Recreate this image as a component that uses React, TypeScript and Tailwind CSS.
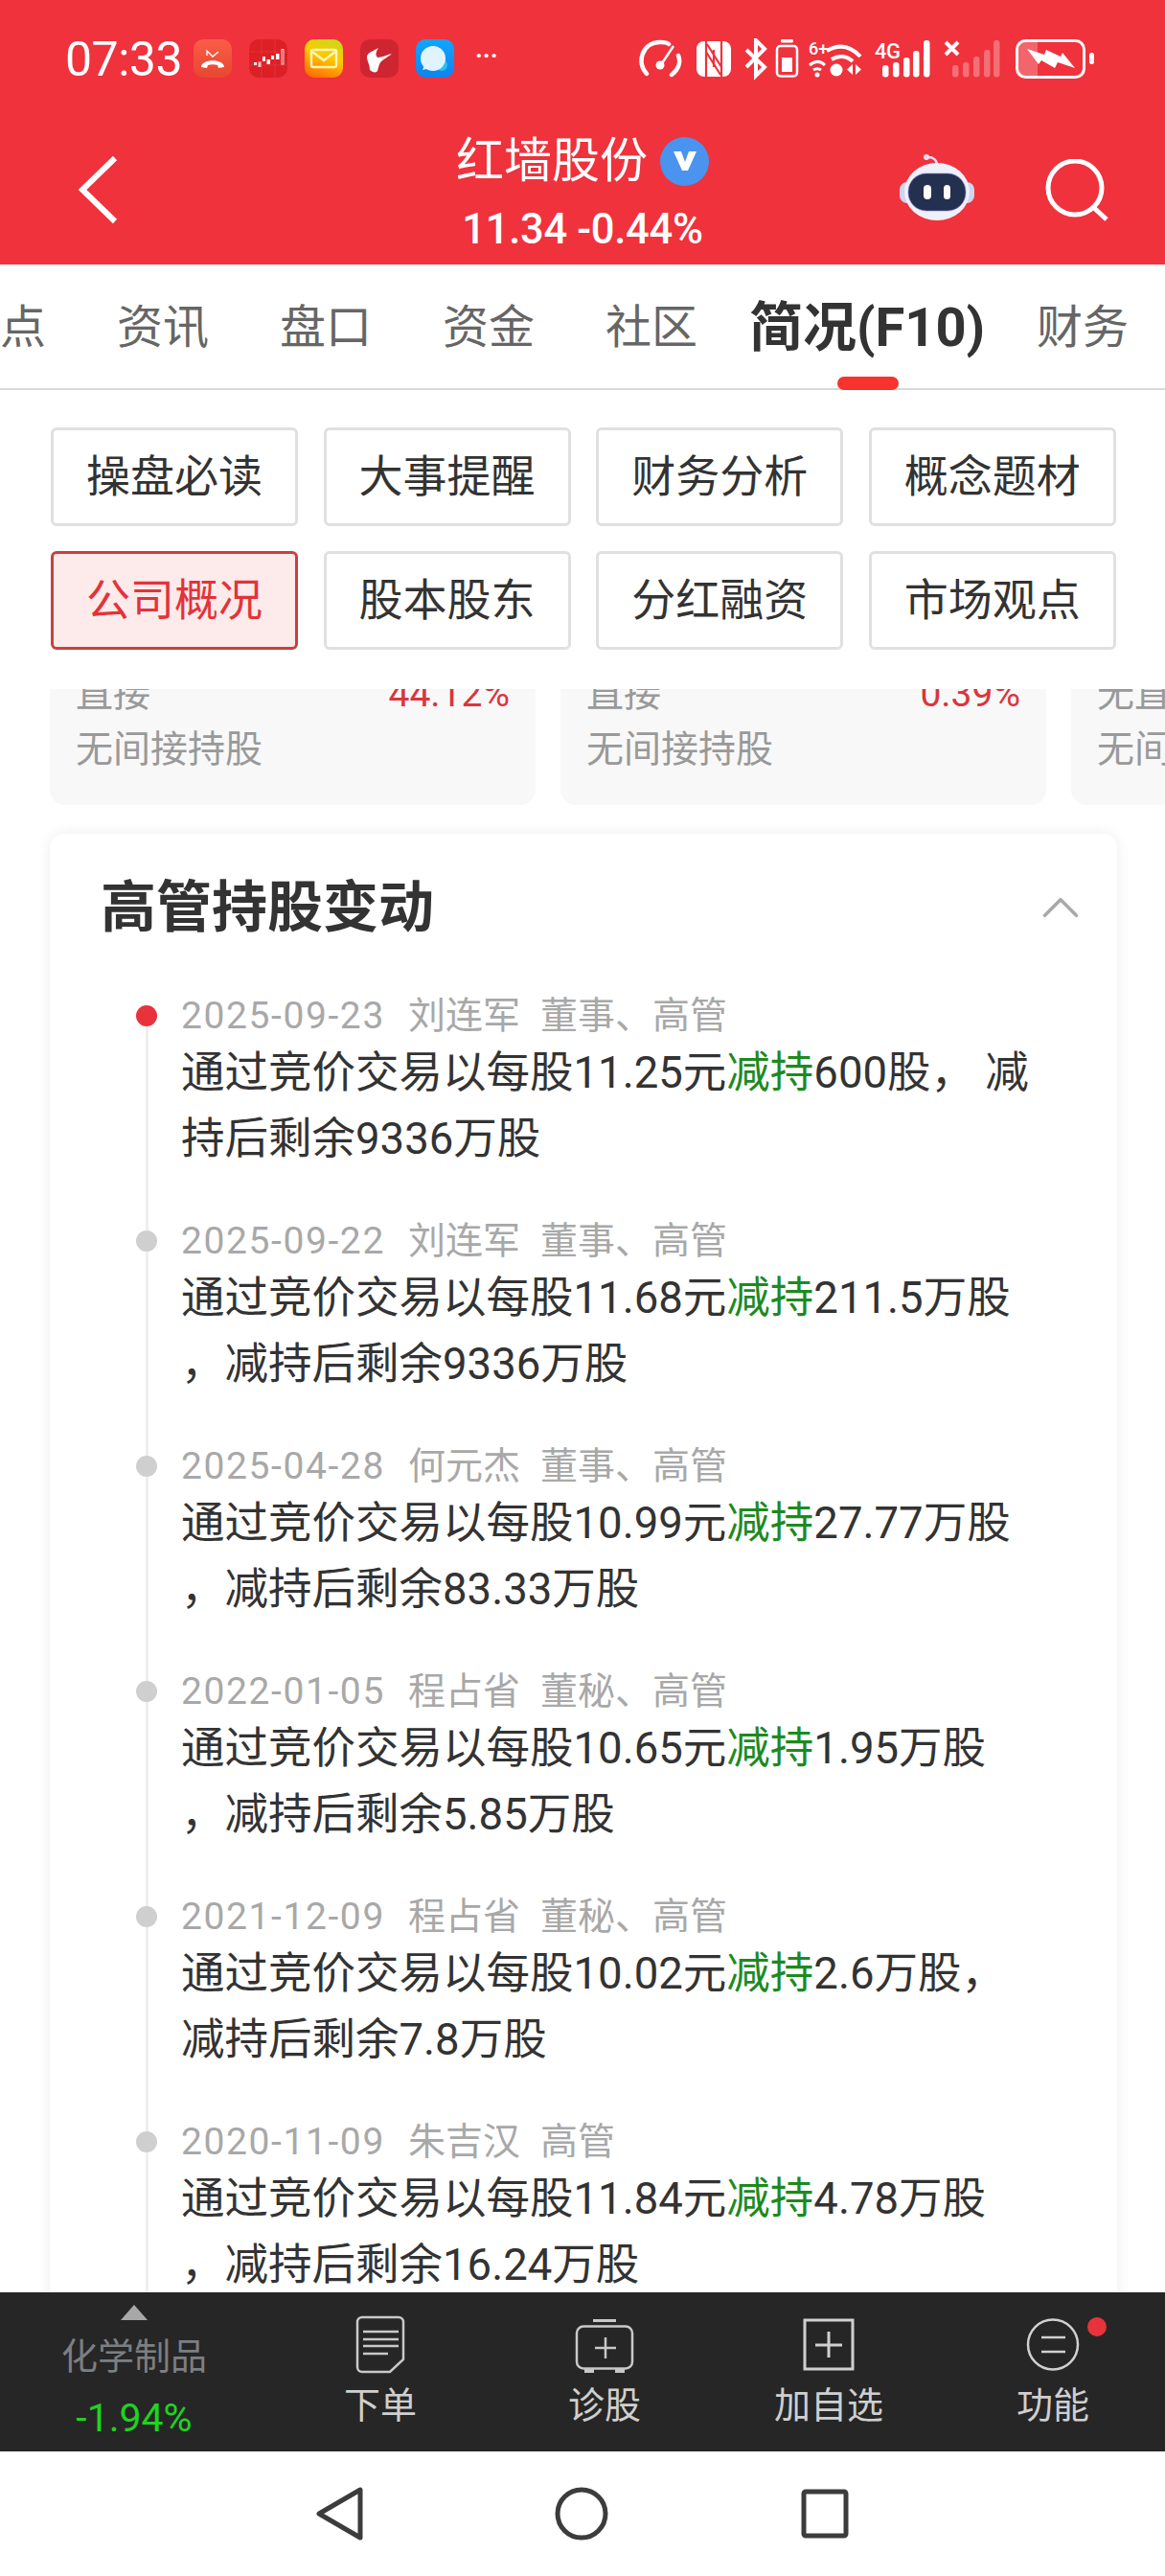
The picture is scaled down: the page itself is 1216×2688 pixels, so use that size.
import { ChevronUp } from "lucide-react";

const TABS = [
  { label: "点", className: "w-[85px]" },
  { label: "资讯", className: "w-[170px]" },
  { label: "盘口", className: "w-[170px]" },
  { label: "资金", className: "w-[170px]" },
  { label: "社区", className: "w-[170px]" },
];

const CHIPS = ["操盘必读", "大事提醒", "财务分析", "概念题材", "公司概况", "股本股东", "分红融资", "市场观点"];

const HOLDINGS = [
  { date: "2025-09-23", name: "刘连军", role: "董事、高管", price: "11.25", line1: "600股， 减", line2: "持后剩余9336万股" },
  { date: "2025-09-22", name: "刘连军", role: "董事、高管", price: "11.68", line1: "211.5万股", line2: "，减持后剩余9336万股" },
  { date: "2025-04-28", name: "何元杰", role: "董事、高管", price: "10.99", line1: "27.77万股", line2: "，减持后剩余83.33万股" },
  { date: "2022-01-05", name: "程占省", role: "董秘、高管", price: "10.65", line1: "1.95万股", line2: "，减持后剩余5.85万股" },
  { date: "2021-12-09", name: "程占省", role: "董秘、高管", price: "10.02", line1: "2.6万股，", line2: "减持后剩余7.8万股" },
  { date: "2020-11-09", name: "朱吉汉", role: "高管", price: "11.84", line1: "4.78万股", line2: "，减持后剩余16.24万股" },
];

const FONT = "font-['Roboto','Noto_Sans_CJK_SC',sans-serif]";

function AppIcon({ className, children }: { className: string; children: React.ReactNode }) {
  return (
    <div className={`h-[40px] w-[40px] overflow-hidden rounded-[10px] ${className}`}>
      <svg width="40" height="40" viewBox="0 0 40 40" fill="none">
        {children}
      </svg>
    </div>
  );
}

function NotificationIcons() {
  return (
    <div className="ml-[14px] flex gap-[18px] pt-[1px]">
      <AppIcon className="bg-linear-to-b from-[#fb5c47] to-[#e8472f]">
        <path d="M14 17v-5l6 6 6-5" stroke="#fff" strokeWidth="1.3" />
        <path d="M8 29c0-9 24-9 24 0l-6 1-1-3c-3-1-7-1-10 0l-1 3z" fill="#fff" />
      </AppIcon>
      <AppIcon className="bg-[#dd2025]">
        <path d="M0 13h40M0 27h40M13 0v40M27 0v40" stroke="#fff" strokeOpacity=".08" />
        <g fill="#fff">
          <rect x="5" y="24" width="3" height="3" />
          <rect x="9.5" y="23.5" width="3" height="5.5" fillOpacity=".7" />
          <rect x="14" y="18" width="3" height="5" />
          <rect x="18.5" y="21" width="3.5" height="5" />
          <rect x="23" y="17" width="3" height="4" />
          <rect x="28" y="15" width="3.5" height="6" />
        </g>
        <rect x="34" y="10.5" width="2" height="15.5" stroke="#fff" strokeOpacity=".8" />
      </AppIcon>
      <AppIcon className="bg-[linear-gradient(200deg,#bfdc1e,#ffc800_45%,#ff5e00)]">
        <rect x="7" y="11" width="26" height="18" rx="2" stroke="#fff6b0" strokeWidth="2.5" />
        <path d="M8 13l12 9 12-9" stroke="#fff6b0" strokeWidth="2.5" />
      </AppIcon>
      <AppIcon className="bg-[#cf2530]">
        <path d="M20 7C18 12 8 12 7 18c0 5 3 8 3 14 3 3 7 3 8 1 1-4 2-8 4-10 3-3 8-5 11-8-5 1-10 4-15 4-3-3-1-7 2-12z" fill="#fff" />
      </AppIcon>
      <AppIcon className="bg-linear-to-b from-[#12a5ff] to-[#0f83ee]">
        <circle cx="27" cy="27" r="6" fill="#25c0f2" />
        <circle cx="18" cy="20" r="13" fill="#dff4ff" />
        <path d="M9 27l-2 5 8-2z" fill="#dff4ff" />
      </AppIcon>
    </div>
  );
}

function SystemIcons() {
  return (
    <svg width="484" height="44" viewBox="0 0 484 44" fill="none" className="shrink-0">
      {/* speed */}
      <path d="M8 37C-3 26 3 4 22 4c4 0 7 0 9 2M41 18c3 7 0 15-7 20" stroke="#fff" strokeWidth="4.5" strokeLinecap="round" />
      <path d="M36 8L24 26" stroke="#fff" strokeWidth="2.5" />
      <circle cx="22" cy="28" r="4.5" fill="#fff" />
      {/* nfc */}
      <rect x="60" y="3" width="36" height="37" rx="8" fill="#fff" />
      <path d="M70 3v37M86 3v37M71 6l15 24M70 14l15 24M78 12v18" stroke="#ef323c" strokeWidth="2.2" />
      {/* bluetooth */}
      <path d="M112 12l19 18-9 9V2l9 9-19 19" stroke="#fff" strokeWidth="4" />
      {/* small battery */}
      <rect x="148" y="1" width="13" height="3.5" rx="1.5" fill="#fff" />
      <rect x="144" y="8" width="21" height="31.5" rx="3.5" stroke="#fff" strokeWidth="2.5" />
      <rect x="149" y="20" width="11" height="15" fill="#fff" />
      {/* wifi */}
      <text x="177" y="17" fill="#fff" fontSize="18" fontFamily="Roboto" fontWeight="500">6+</text>
      <path d="M196 13c12-7 24-6 35 6M201 22c7-4 15-4 22 2" stroke="#fff" strokeWidth="4" />
      <path d="M178 28c6-5 11-5 16 0M182 33c3-2 5-2 8 0" stroke="#fff" strokeWidth="3" />
      <circle cx="186" cy="38" r="2.5" fill="#fff" />
      <circle cx="206" cy="33" r="6.5" fill="#fff" />
      <path d="M223 27v11l-6-5.5zM226 27v11l6-5.5z" fill="#fff" />
      {/* 4G */}
      <text x="246" y="21" fill="#fff" fontSize="22" fontFamily="Roboto" fontWeight="500" textLength="27">4G</text>
      <g fill="#fff">
        <rect x="254" y="28" width="6.5" height="12.5" rx="3" />
        <rect x="265" y="25" width="6.5" height="15.5" rx="3" />
        <rect x="276" y="20" width="6.5" height="20.5" rx="3" />
        <rect x="286" y="13" width="6.5" height="27.5" rx="3" />
        <rect x="297" y="2" width="6.5" height="38.5" rx="3" />
      </g>
      {/* empty sim */}
      <path d="M320 4l13 13M333 4l-13 13" stroke="#fff" strokeWidth="4" />
      <g fill="#fff" fillOpacity=".3">
        <rect x="327" y="28" width="6.5" height="12.5" rx="3" />
        <rect x="338" y="25" width="6.5" height="15.5" rx="3" />
        <rect x="349" y="19" width="6.5" height="21.5" rx="3" />
        <rect x="360" y="12" width="6.5" height="28.5" rx="3" />
        <rect x="370" y="2" width="6.5" height="38.5" rx="3" />
      </g>
      {/* battery */}
      <rect x="394.5" y="2.5" width="70" height="38" rx="9" stroke="#fff" strokeWidth="3" />
      <path d="M396 11a7 7 0 0 1 7-7h13v35h-13a7 7 0 0 1-7-7z" fill="#fff" fillOpacity=".25" />
      <path d="M405 11l18 6 2-5 15 7 2-4 13 16-18-6-3 6-14-8-3 4z" fill="#fff" />
      <rect x="470" y="15" width="5" height="12" rx="2.5" fill="#fff" />
    </svg>
  );
}

function Robot() {
  return (
    <svg width="80" height="74" viewBox="0 0 80 74" fill="none">
      <path d="M31 3c5 0 9 3 9 8" stroke="#e4d8f4" strokeWidth="2.5" />
      <circle cx="29" cy="3" r="3" fill="#e8dcf4" />
      <rect x="1" y="29" width="78" height="22" rx="8" fill="#cfd4ef" />
      <ellipse cx="40" cy="39" rx="34" ry="30" fill="#eef0fa" />
      <rect x="10" y="20" width="60" height="39" rx="19" fill="#24304f" stroke="#8a74d8" strokeOpacity=".6" />
      <rect x="26" y="32" width="8" height="15" rx="4" fill="#fff" />
      <rect x="47" y="32" width="7" height="15" rx="3.5" fill="#fff" />
    </svg>
  );
}

function Header() {
  return (
    <header className="flex h-[276px] shrink-0 flex-col bg-[#ef323c] text-white">
      <div className="flex h-[124px] items-start pl-[68px] pt-[40px] pr-[65px]">
        <span className="w-[120px] text-[50px] leading-[44px] tracking-[-0.5px]">07:33</span>
        <NotificationIcons />
        <span className="ml-[22px] text-[26px] font-bold leading-[36px]">···</span>
        <div className="ml-auto">
          <SystemIcons />
        </div>
      </div>
      <div className="relative flex flex-1 flex-col items-center">
        <div className="mt-[14px] flex items-center">
          <span className="text-[50px] leading-[60px]">红墙股份</span>
          <span className="ml-[13px] flex h-[51px] w-[51px] items-center justify-center rounded-full bg-[#4a93ee]">
            <svg width="26" height="22" viewBox="0 0 26 22"><path d="M1 1h8l4 11 4-11h8l-9 20h-6z" fill="#fff" /></svg>
          </span>
        </div>
        <div className="mt-[19px] text-[43.5px] font-medium leading-[46px] tracking-[-0.3px]">11.34 -0.44%</div>
        <svg width="42" height="72" viewBox="0 0 42 72" fill="none" className="absolute left-[82px] top-[38px]">
          <path d="M38 3L4 36l34 33" stroke="#fff" strokeWidth="6" />
        </svg>
        <div className="absolute left-[938px] top-[37px]">
          <Robot />
        </div>
        <svg width="68" height="68" viewBox="0 0 68 68" fill="none" className="absolute left-[1090px] top-[42px]">
          <circle cx="32" cy="30" r="28" stroke="#fff" strokeWidth="5" />
          <path d="M52 51l13 12" stroke="#fff" strokeWidth="5" />
        </svg>
      </div>
    </header>
  );
}

function Tabs() {
  return (
    <nav className="relative flex h-[131px] shrink-0 items-center border-b-2 border-[#d9d9d9] bg-white pt-[2px] text-[48px] leading-[60px] text-[#666]">
      {TABS.map((t) => (
        <span key={t.label} className={`shrink-0 text-center ${t.className} ${t.label === "点" ? "text-left" : ""}`}>
          {t.label}
        </span>
      ))}
      <span className="ml-[17px] w-[250px] shrink-0 text-left text-[56px] font-bold text-[#333]">简况(F10)</span>
      <span className="ml-[50px]">财务</span>
      <span className="absolute bottom-[-2px] left-[874px] h-[14px] w-[64px] rounded-full bg-[#f8332f]" />
    </nav>
  );
}

function ChipGrid() {
  return (
    <div className="grid shrink-0 grid-cols-[258px_258px_258px_258px] gap-x-[26.6px] gap-y-[26px] pl-[53px] pt-[39px] pb-[41px]">
      {CHIPS.map((c) =>
        c === "公司概况" ? (
          <div key={c} className="flex h-[103px] items-center justify-center rounded-[6px] border-[3px] border-[#c9403f] bg-[#fdeaea] text-[46px] text-[#e2333a]">
            {c}
          </div>
        ) : (
          <div key={c} className="flex h-[103px] items-center justify-center rounded-[6px] border-[3px] border-[#e0e0e0] bg-white text-[46px] text-[#333]">
            {c}
          </div>
        ),
      )}
    </div>
  );
}

function HolderCards() {
  const cards = [
    { a: "直接", b: "44.12%", c: "无间接持股" },
    { a: "直接", b: "0.39%", c: "无间接持股" },
    { a: "无直接持股", b: "", c: "无间接持股" },
  ];
  return (
    <div className="-mt-[44px] flex gap-[26px] pl-[52px]">
      {cards.map((c, i) => (
        <div key={i} className="h-[165px] w-[507px] shrink-0 rounded-[16px] bg-[#f8f8f8] px-[27px] pt-[24px] text-[39px] leading-[50px] text-[#999]">
          <div className="flex justify-between">
            <span>{c.a}</span>
            <span className="text-[#d9363e]">{c.b}</span>
          </div>
          <div className="mt-[8px]">{c.c}</div>
        </div>
      ))}
    </div>
  );
}

function HoldingRow({ row, active }: { row: (typeof HOLDINGS)[number]; active: boolean }) {
  return (
    <div className="relative h-[235px] pl-[137px]">
      <span className={`absolute left-[90px] top-[11px] h-[22px] w-[22px] rounded-full ${active ? "bg-[#e8333c]" : "bg-[#cfcfcf]"}`} />
      <div className="flex h-[44px] items-center text-[39px] text-[#a8a8a8]">
        <span className="w-[237px] tracking-[1.6px]">{row.date}</span>
        <span className="w-[138px]">{row.name}</span>
        <span>{row.role}</span>
      </div>
      <p className="mt-[3px] whitespace-nowrap text-[45.5px] leading-[69px] text-[#333]">
        通过竞价交易以每股{row.price}元<span className="text-[#1d8a1d]">减持</span>
        {row.line1}
        <br />
        {row.line2}
      </p>
    </div>
  );
}

function HoldingChanges() {
  return (
    <section className="relative ml-[52px] mt-[30px] w-[1114px] rounded-[14px] bg-white pt-[43px] shadow-[0_0_14px_rgba(0,0,0,0.08)]">
      <div className="flex items-center justify-between pl-[53px] pr-[26px]">
        <h2 className="text-[58px] font-bold leading-[68px] text-[#333]">高管持股变动</h2>
        <ChevronUp className="h-[66px] w-[66px] text-[#a9a9a9]" strokeWidth={1.3} />
      </div>
      <div className="relative mt-[57px]">
        <span className="absolute bottom-0 left-[100px] top-[20px] w-[3px] bg-[#eeeeee]" />
        {HOLDINGS.map((row, i) => (
          <HoldingRow key={row.date} row={row} active={i === 0} />
        ))}
      </div>
    </section>
  );
}

function BottomBar() {
  return (
    <footer className="flex h-[166px] shrink-0 bg-[#262626] text-[#cfcfcf]">
      <div className="flex w-[280px] flex-col items-center pt-[13px]">
        <span className="h-0 w-0 border-x-[14px] border-b-[16px] border-x-transparent border-b-[#a8a8a8]" />
        <span className="mt-[14px] text-[38px] leading-[48px] text-[#7c7f82]">化学制品</span>
        <span className="mt-[18px] text-[41px] leading-[44px] text-[#1fd31f]">-1.94%</span>
      </div>
      <BarItem label="下单">
        <svg width="54" height="62" viewBox="0 0 54 62" fill="none" stroke="#c8c8c8" strokeWidth="2.5">
          <path d="M8 3h38a5 5 0 0 1 5 5v39L37 60H8a5 5 0 0 1-5-5V8a5 5 0 0 1 5-5z" />
          <path d="M9 18h37M9 26h37M9 33h37M9 41h26" />
        </svg>
      </BarItem>
      <BarItem label="诊股">
        <svg width="62" height="62" viewBox="0 0 62 62" fill="none" stroke="#c8c8c8" strokeWidth="2.5">
          <path d="M19 6.5h24" strokeWidth="3" />
          <rect x="2" y="12.5" width="58" height="44" rx="7" />
          <path d="M32 24v22M21 35h22" />
          <path d="M10 59h10M42 59h10" strokeWidth="4" />
        </svg>
      </BarItem>
      <BarItem label="加自选">
        <svg width="54" height="62" viewBox="0 0 54 62" fill="none" stroke="#d0d0d0" strokeWidth="3">
          <rect x="2" y="6" width="50" height="51" />
          <path d="M27 18v27M13 32h28" />
        </svg>
      </BarItem>
      <BarItem label="功能" dot>
        <svg width="56" height="62" viewBox="0 0 56 62" fill="none" stroke="#d0d0d0" strokeWidth="2.5">
          <circle cx="28" cy="31.5" r="26" />
          <path d="M16 24h25M16 39h25" />
        </svg>
      </BarItem>
    </footer>
  );
}

function BarItem({ label, dot, children }: { label: string; dot?: boolean; children: React.ReactNode }) {
  return (
    <div className="relative flex w-[234px] flex-col items-center">
      <div className="flex h-[90px] items-end pb-[5px]">{children}</div>
      <span className="mt-[6px] text-[38px] leading-[44px]">{label}</span>
      {dot && <span className="absolute left-[153px] top-[26px] h-[20px] w-[20px] rounded-full bg-[#e8333c]" />}
    </div>
  );
}

function SystemNav() {
  return (
    <div className="flex h-[130px] shrink-0 items-center bg-white pl-[330px]">
      <svg width="50" height="56" viewBox="0 0 50 56" fill="none" stroke="#3c3c3c" strokeWidth="5" strokeLinejoin="round">
        <path d="M46 3v50L3 28z" />
      </svg>
      <svg width="56" height="56" viewBox="0 0 56 56" fill="none" stroke="#3c3c3c" strokeWidth="5" className="ml-[199px]">
        <circle cx="28" cy="28" r="25" />
      </svg>
      <svg width="50" height="52" viewBox="0 0 50 52" fill="none" stroke="#3c3c3c" strokeWidth="5" className="ml-[201px]">
        <rect x="3" y="3" width="44" height="46" rx="2" />
      </svg>
    </div>
  );
}

export default function App() {
  return (
    <div className={`flex h-[2688px] w-[1216px] flex-col overflow-hidden bg-white ${FONT}`}>
      <Header />
      <Tabs />
      <ChipGrid />
      <main className="min-h-0 flex-1 overflow-hidden">
        <HolderCards />
        <HoldingChanges />
      </main>
      <BottomBar />
      <SystemNav />
    </div>
  );
}
